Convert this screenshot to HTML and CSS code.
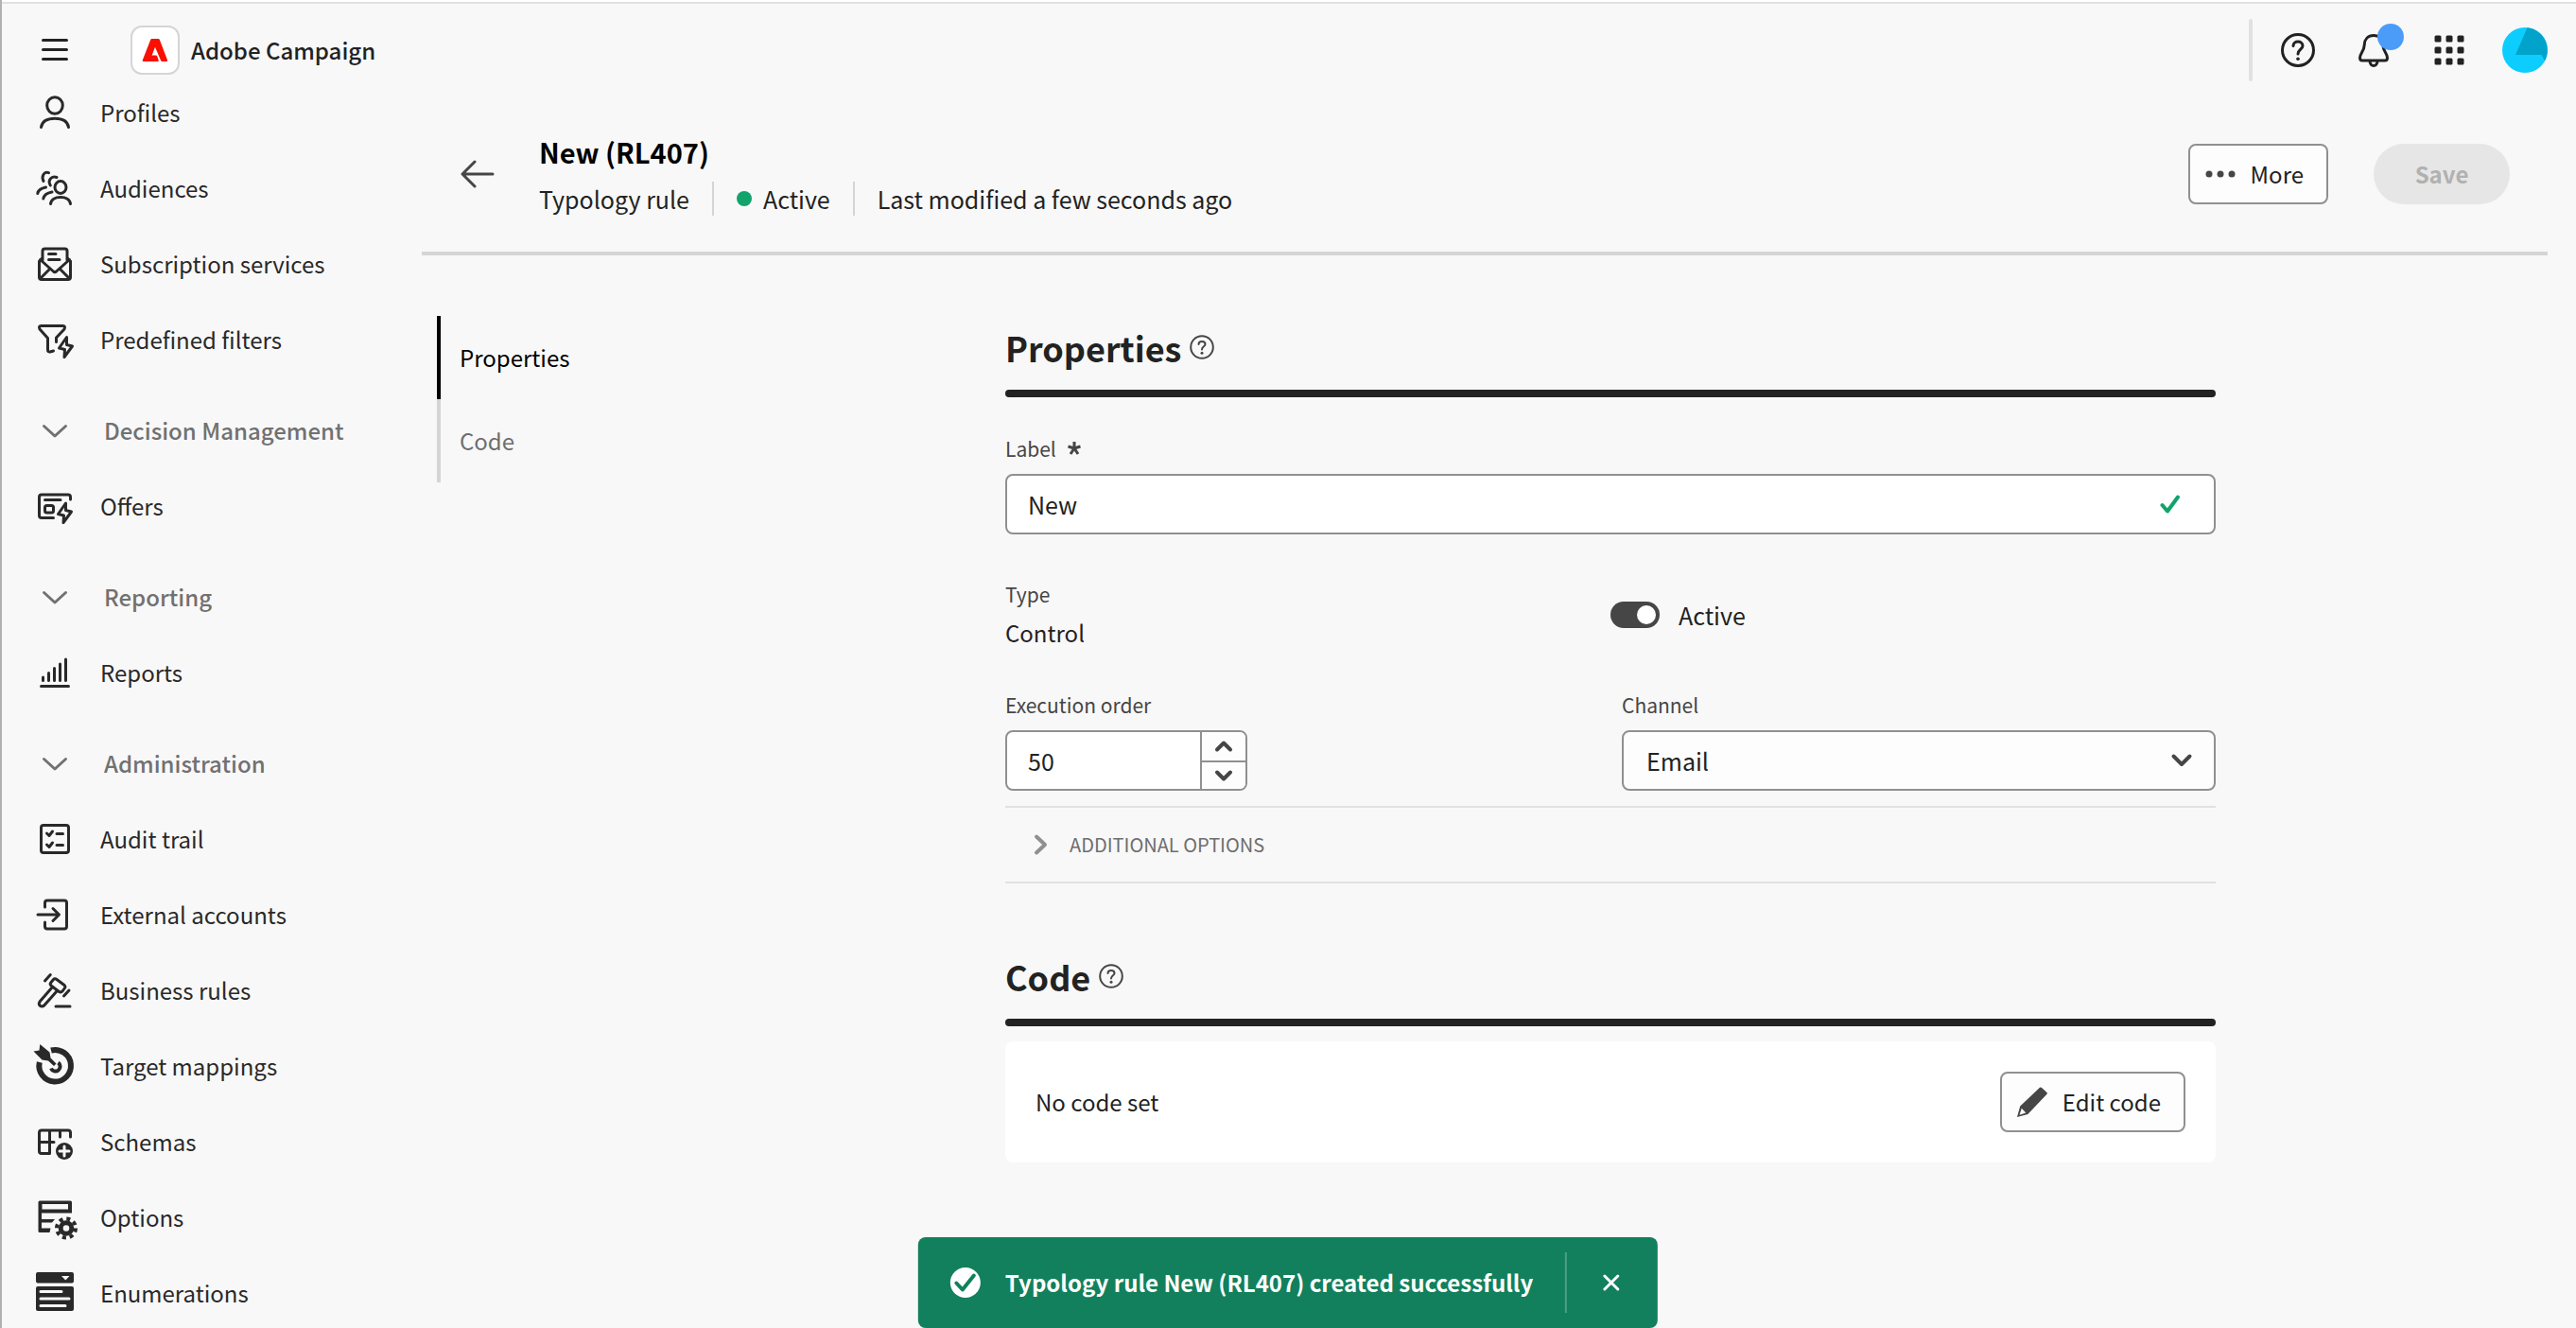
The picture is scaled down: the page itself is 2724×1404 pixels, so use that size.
FILE: index.html
```html
<!DOCTYPE html>
<html lang="en">
<head>
<meta charset="utf-8">
<title>New (RL407) - Adobe Campaign</title>
<link rel="stylesheet" href="styles.css">
</head>
<body>
<div class="app">
  <header class="topbar">
    <button class="icon-button menu-button" type="button" aria-label="Menu">
      <svg class="icon" viewBox="0 0 40 40"><path d="M7.500 9.500H32.500M7.500 19.500H32.500M7.500 29.500H32.500"/></svg>
    </button>
    <a class="brand" href="#">
      <span class="brand-logo">
        <svg viewBox="0 0 28 26" width="28" height="26"><path fill="#fa0f00" d="M10.500 1H17.500q.9 0 1.300.9L27 23.500q.5 1.500-1 1.500H21.500q-1 0-1.400-.9L14 9.800 10.600 18.500H15q.8 0 1.100.8L17.700 23.400q.5 1.600-1 1.600H1.500Q.200 25 .8 23.500L9.200 1.900Q9.600 1 10.500 1z"/></svg>
      </span>
      <span class="brand-name">Adobe Campaign</span>
    </a>
    <div class="topbar-actions">
      <button class="icon-button" type="button" aria-label="Help">
        <svg class="icon" viewBox="0 0 40 40"><circle cx="20" cy="20" r="16.500"/><path d="M15 15.500C15 9.500 25 9.500 25 15.500 25 19 20 19.500 20 24"/><circle class="fill" cx="20" cy="29.300" r="1.800"/></svg>
      </button>
      <button class="icon-button bell" type="button" aria-label="Notifications">
        <svg class="icon" viewBox="0 0 40 40"><path d="M20 4.500C14 4.500 10.500 8.500 10.300 14 10 21.500 5.500 23.500 5.500 28q0 3 2.500 3H32q2.500 0 2.500-3C34.500 23.500 30 21.500 29.700 14 29.500 8.500 26 4.500 20 4.500zM16 31.500C16 38 24 38 24 31.500"/></svg>
        <span class="badge"></span>
      </button>
      <button class="icon-button" type="button" aria-label="Apps">
        <svg class="icon solid" viewBox="0 0 40 40"><rect x="4.500" y="4.500" width="7" height="7" rx="1.500"/><rect x="16.500" y="4.500" width="7" height="7" rx="1.500"/><rect x="28.500" y="4.500" width="7" height="7" rx="1.500"/><rect x="4.500" y="16.500" width="7" height="7" rx="1.500"/><rect x="16.500" y="16.500" width="7" height="7" rx="1.500"/><rect x="28.500" y="16.500" width="7" height="7" rx="1.500"/><rect x="4.500" y="28.500" width="7" height="7" rx="1.500"/><rect x="16.500" y="28.500" width="7" height="7" rx="1.500"/><rect x="28.500" y="28.500" width="7" height="7" rx="1.500"/></svg>
      </button>
      <button class="avatar" type="button" aria-label="Account">
        <svg viewBox="0 0 48 48" width="48" height="48"><circle cx="24" cy="24" r="24" fill="#0dcdff"/><path fill="#01a3cb" d="M26.500.200A24 24 0 0 1 45 35.200L41.500 29H14z"/></svg>
      </button>
    </div>
  </header>

  <nav class="sidebar" aria-label="Main">
    <ul class="nav-list">
      <li><a class="nav-item" href="#"><svg class="icon" viewBox="0 0 40 40"><ellipse cx="20" cy="12.500" rx="8.300" ry="8.800"/><path d="M5.500 35.500C6.500 29.500 12 26.300 20 26.300S33.500 29.500 34.500 35.500"/></svg>Profiles</a></li>
      <li><a class="nav-item" href="#"><svg class="icon" viewBox="0 0 40 40"><ellipse cx="26" cy="19" rx="6" ry="6.500"/><path d="M15.500 36.500C16 32 20.500 29.500 26 29.500S36 32 36.500 36.500M22 8.500C16.500 6.500 12 11.500 15.300 17M13.500 3.700C8.500 2 5.500 7.500 8 12.500M17 24C11.500 25 8.500 27.500 7.800 31M10.500 19C5.500 20 2.300 22.500 1.800 25.500"/></svg>Audiences</a></li>
      <li><a class="nav-item" href="#"><svg class="icon" viewBox="0 0 40 40"><path d="M7 16V6.500q0-2.500 2.500-2.500H30.500q2.500 0 2.500 2.500V16M7 13.500L3.500 17V34q0 2.500 2.500 2.500H34q2.500 0 2.500-2.500V17L33 13.500M4.500 15.500L18.500 28q1.500 1.200 3 0L35.500 15.500M4.500 35.500L14.500 25.500M35.500 35.500L25.500 25.500M13.500 9.500H21M13.500 15.500H25"/></svg>Subscription services</a></li>
      <li><a class="nav-item" href="#"><svg class="icon" viewBox="0 0 40 40"><path d="M18.500 32L15 33q-2.500.3-2.500-2V18.500L4 9Q2.500 5.500 5.500 5.500H28.500q3 0 1.500 3.500L21.500 18V22.500"/><path d="M32.500 17.500L24.500 29 30.500 30.500 30 38.500 38.500 27 32.500 25.500z"/></svg>Predefined filters</a></li>
      <li class="nav-group"><button class="nav-item nav-heading" type="button" aria-expanded="true"><svg class="icon" viewBox="0 0 40 40"><path d="M8.500 15.500L20 26 31.500 15.500"/></svg>Decision Management</button></li>
      <li><a class="nav-item" href="#"><svg class="icon" viewBox="0 0 40 40"><path d="M36.500 13V10.500q0-2.500-2.500-2.500H6Q3.500 8 3.500 10.500V30q0 2.500 2.500 2.500H18.500M9.500 13.500H26"/><rect x="9.500" y="19.500" width="9" height="7.500" rx="2"/><path d="M31.500 17L23.500 28.500 29.500 30 29 37.500 37.500 26 31.500 24.500z"/></svg>Offers</a></li>
      <li class="nav-group"><button class="nav-item nav-heading" type="button" aria-expanded="true"><svg class="icon" viewBox="0 0 40 40"><path d="M8.500 15.500L20 26 31.500 15.500"/></svg>Reporting</button></li>
      <li><a class="nav-item" href="#"><svg class="icon" viewBox="0 0 40 40"><path d="M7.500 25V28.500M13.500 20.500V28.500M19.500 15.500V28.500M25.500 11V28.500M31.500 6V28.500M5.500 34.500H34.500"/></svg>Reports</a></li>
      <li class="nav-group"><button class="nav-item nav-heading" type="button" aria-expanded="true"><svg class="icon" viewBox="0 0 40 40"><path d="M8.500 15.500L20 26 31.500 15.500"/></svg>Administration</button></li>
      <li><a class="nav-item" href="#"><svg class="icon" viewBox="0 0 40 40"><rect x="5.500" y="5.500" width="29" height="29" rx="2.500"/><path d="M11.500 14L14 16.500 17.500 12M11.500 26L14 28.500 17.500 24M22 14.500H28.500M22 26.500H28.500"/></svg>Audit trail</a></li>
      <li><a class="nav-item" href="#"><svg class="icon" viewBox="0 0 40 40"><path d="M9.500 12V7.500Q9.500 5 12 5H30q2.500 0 2.500 2.500V32.500q0 2.500-2.500 2.500H12q-2.500 0-2.500-2.500V28M2 20H24M18 13.500L24.500 20 18 26.500"/></svg>External accounts</a></li>
      <li><a class="nav-item" href="#"><svg class="icon" viewBox="0 0 40 40"><path d="M18.500 8.500Q20 7 22 8.500L30 14.500q1.500 1.500.5 3L28 21q-1.500 1.500-3.500.5L16 15q-1.500-1.500-.3-3zM17 17L4 32q-1.500 2.500.2 4.200 2.300 1.500 4.500-.2L22 21M15.300 3.500L9.500 10M35 20L29.500 26M21 37H36"/></svg>Business rules</a></li>
      <li><a class="nav-item" href="#"><svg class="icon" viewBox="0 0 40 40"><path class="thick" d="M16 3.500A16.800 16.800 0 1 1 3.800 16"/><path class="fill" d="M-2.500 4.500L3.500 3.500 4.300-3 14.500 5.500 15.500 11.500 21.500 17.500 19 20 13 14.500 6.500 13.500z"/><path class="mid" d="M23.500 16.500A5 5 0 1 1 16 22.500"/></svg>Target mappings</a></li>
      <li><a class="nav-item" href="#"><svg class="icon" viewBox="0 0 40 40"><path d="M36.500 15V10.500Q36.500 8 34 8H6Q3.500 8 3.500 10.500V30q0 2.500 2.500 2.500H14.500V8M25.500 8V15M3.500 20.500H19"/><circle class="fill" cx="30" cy="30" r="9"/><path class="knock" d="M30 25V35M25 30H35"/></svg>Schemas</a></li>
      <li><a class="nav-item" href="#"><svg class="icon solid" viewBox="0 0 40 40"><path fill-rule="evenodd" d="M4 2.500H36.500q1.500 0 1.500 1.500V15.500H6V22H20L17 25.500H6V31.500H15.500L14.500 36H4q-1.500 0-1.500-1.500V4q0-1.500 1.500-1.500zM6.500 6V11.500H34V6z"/><circle class="gear-teeth" cx="32" cy="31.500" r="10"/><circle class="gear-body" cx="32" cy="31.500" r="5.800"/></svg>Options</a></li>
      <li><a class="nav-item" href="#"><svg class="icon solid" viewBox="0 0 40 40"><path fill-rule="evenodd" d="M2-2H38q2 0 2 2V7.500q0 2-2 2H2q-2 0-2-2V0Q0-2 2-2zM27 2L31.300 6.500 35.500 2z"/><rect y="13" width="40" height="26" rx="2"/><path class="knock" d="M5 18.500H27M5 26H35M5 33.500H31"/></svg>Enumerations</a></li>
    </ul>
  </nav>

  <main class="main">
    <header class="page-header">
      <button class="icon-button" type="button" aria-label="Back">
        <svg class="icon back" viewBox="0 0 40 40"><path d="M35 20H3.500M16 7L3 20 16 33"/></svg>
      </button>
      <div class="page-title">
        <h1>New (RL407)</h1>
        <div class="meta">
          <span>Typology rule</span>
          <span class="meta-status">Active</span>
          <span>Last modified a few seconds ago</span>
        </div>
      </div>
      <button class="button" type="button">
        <svg class="button-icon" viewBox="0 0 32 32"><circle cx="4" cy="16" r="3.500"/><circle cx="16" cy="16" r="3.500"/><circle cx="28" cy="16" r="3.500"/></svg>More
      </button>
      <button class="button-save" type="button" disabled>Save</button>
    </header>

    <div class="content">
      <nav class="tabs" aria-label="Sections">
        <a class="tab tab-current" href="#properties">Properties</a>
        <a class="tab" href="#code">Code</a>
      </nav>

      <form class="form">
        <section id="properties">
          <h2>Properties
            <svg class="help" viewBox="0 0 26 26"><circle cx="13" cy="13" r="11.800"/><path d="M9.500 10C9.500 6 16.500 6 16.500 10 16.500 12.300 13 12.500 13 15.500"/><circle class="fill" cx="13" cy="19.300" r="1.500"/></svg>
          </h2>
          <div class="field">
            <label for="label">Label <svg class="asterisk" viewBox="0 0 16 16"><path d="M8 8V1M8 8L14.500 6M8 8L12 14M8 8L4 14M8 8L1.500 6"/></svg></label>
            <div class="control">
              <input class="box" id="label" type="text" value="New" required>
              <svg class="control-icon valid" viewBox="0 0 24 24"><path d="M3.500 13L9 19.500 20 4.500"/></svg>
            </div>
          </div>
          <div class="row row-type">
            <div>
              <div class="caption">Type</div>
              <div class="value">Control</div>
            </div>
            <label class="switch"><input type="checkbox" checked>Active</label>
          </div>
          <div class="row row-order">
            <div class="field">
              <label for="order">Execution order</label>
              <div class="stepper">
                <input id="order" type="number" value="50">
                <div class="stepper-buttons">
                  <button type="button" aria-label="Increase"><svg viewBox="0 0 20 14"><path d="M3 10.500L10 3.500 17 10.500"/></svg></button>
                  <button type="button" aria-label="Decrease"><svg viewBox="0 0 20 14"><path d="M3 3.500L10 10.500 17 3.500"/></svg></button>
                </div>
              </div>
            </div>
            <div class="field field-channel">
              <label for="channel">Channel</label>
              <div class="control">
                <select class="box" id="channel"><option>Email</option></select>
                <svg class="control-icon arrow" viewBox="0 0 24 24"><path d="M3.500 7.500L12 16 20.500 7.500"/></svg>
              </div>
            </div>
          </div>
          <button class="accordion" type="button" aria-expanded="false">
            <svg viewBox="0 0 16 24"><path d="M3 3.500L12 12 3 20.500"/></svg>ADDITIONAL OPTIONS
          </button>
        </section>

        <section id="code">
          <h2>Code
            <svg class="help" viewBox="0 0 26 26"><circle cx="13" cy="13" r="11.800"/><path d="M9.500 10C9.500 6 16.500 6 16.500 10 16.500 12.300 13 12.500 13 15.500"/><circle class="fill" cx="13" cy="19.300" r="1.500"/></svg>
          </h2>
          <div class="card">
            <span>No code set</span>
            <button class="button" type="button">
              <svg class="button-icon" viewBox="0 0 32 32"><path fill-rule="evenodd" d="M24 .700Q25 0 26 .900L31.500 6q.8.900 0 1.800L11.300 29 0 32 3.200 20.500zM4.800 22.800L2.500 29.800 9.300 27.500z"/></svg>Edit code
            </button>
          </div>
        </section>
      </form>
    </div>
  </main>
</div>

<div class="toast" role="status">
  <svg class="toast-icon" viewBox="0 0 32 32"><circle cx="16" cy="16" r="16" fill="#fff" stroke="none"/><path d="M6.500 16.500L13 23.500 25 8.500"/></svg>
  <span>Typology rule New (RL407) created successfully</span>
  <button class="toast-close" type="button" aria-label="Close"><svg viewBox="0 0 20 20"><path d="M3 3L17 17M17 3L3 17"/></svg></button>
</div>
</body>
</html>
```
FILE: styles.css
```css
* {
  box-sizing: border-box;
}

body {
  margin: 0;
  background: #f8f8f8;
  color: #222;
  font-family: "Noto Sans CJK SC", "Open Sans", sans-serif;
  font-size: 24px;
  line-height: 36px;
  overflow: hidden;
}

button,
input,
select {
  color: inherit;
  font: inherit;
}

button {
  border: 0;
  background: none;
  padding: 0;
}

a {
  color: inherit;
  text-decoration: none;
}

svg {
  display: block;
  flex: none;
  overflow: visible;
  fill: none;
  stroke: currentColor;
  stroke-linecap: round;
  stroke-linejoin: round;
}

.app {
  display: grid;
  grid-template: auto 1fr / 444px 1fr;
  height: 100vh;
  border-left: 2px solid #b1b1b1;
}

/* Top bar */
.topbar {
  grid-column: 1 / -1;
  display: flex;
  align-items: center;
  border-top: 2px solid #fff;
  padding: 18px 30px 0 36px;
}

.topbar::before {
  content: "";
  position: absolute;
  top: 2px;
  left: 2px;
  right: 0;
  height: 2px;
  background: #e1e1e1;
}

.icon {
  width: 40px;
  height: 40px;
  stroke-width: 3;
}

.icon .fill {
  fill: currentColor;
  stroke: none;
}

.icon.solid {
  fill: currentColor;
  stroke: none;
}

.icon .knock {
  fill: none;
  stroke: #f8f8f8;
  stroke-width: 3;
}

.icon .thick {
  stroke-width: 6;
  stroke-linecap: butt;
}

.icon .mid {
  stroke-width: 4;
  stroke-linecap: butt;
}

.gear-teeth {
  fill: none;
  stroke: #292929;
  stroke-width: 4;
  stroke-linecap: butt;
  stroke-dasharray: 4 3.854;
}

.gear-body {
  fill: #f8f8f8;
  stroke: #292929;
  stroke-width: 5;
}

.menu-button {
  margin-right: 60px;
}

.brand {
  display: flex;
  align-items: center;
  gap: 12px;
  font-weight: 500;
}

.brand-logo {
  display: grid;
  place-items: center;
  width: 52px;
  height: 52px;
  border: 2px solid #d5d5d5;
  border-radius: 12px;
  background: #fff;
}

.brand-logo svg {
  stroke: none;
}

.topbar-actions {
  display: flex;
  align-items: center;
  gap: 40px;
  margin-left: auto;
  height: 66px;
}

.topbar-actions::before {
  content: "";
  width: 4px;
  height: 66px;
  margin-right: -12px;
  border-radius: 2px;
  background: #e1e1e1;
}

.bell {
  position: relative;
}

.badge {
  position: absolute;
  top: -8px;
  right: -12px;
  width: 28px;
  height: 28px;
  border-radius: 50%;
  background: #4b9cf9;
}

.avatar {
  margin-left: -4px;
}

.avatar svg {
  stroke: none;
}

/* Sidebar */
.sidebar {
  overflow: hidden;
  color: #292929;
}

.nav-list {
  margin: -7px 0 0;
  padding: 0;
  list-style: none;
}

.nav-item {
  display: flex;
  align-items: center;
  gap: 28px;
  width: 100%;
  height: 80px;
  padding-left: 36px;
}

.nav-group {
  padding-top: 16px;
}

.nav-heading {
  gap: 32px;
  color: #717171;
  font-weight: 500;
}

/* Page header */
.main {
  min-width: 0;
  padding-right: 30px;
}

.page-header {
  display: flex;
  align-items: center;
  height: 184px;
  padding: 16px 40px 0 40px;
  border-bottom: 4px solid #d5d5d5;
}

.icon.back {
  color: #464646;
}

.page-title {
  flex: 1;
  padding-left: 44px;
}

h1 {
  margin: 0 0 12px;
  color: #000;
  font-size: 29px;
  font-weight: 700;
  line-height: 40px;
}

.meta {
  display: flex;
  font-size: 25px;
}

.meta span + span {
  margin-left: 24px;
  padding-left: 24px;
  border-left: 2px solid #d5d5d5;
}

.meta-status {
  display: flex;
  align-items: center;
  gap: 12px;
}

.meta-status::before {
  content: "";
  width: 16px;
  height: 16px;
  border-radius: 50%;
  background: #12a36c;
}

.button {
  display: flex;
  align-items: center;
  gap: 16px;
  height: 64px;
  padding: 0 24px 0 16px;
  border: 2px solid #909090;
  border-radius: 8px;
  background: #fdfdfd;
}

.button-icon {
  width: 32px;
  height: 32px;
  fill: #464646;
  stroke: none;
}

.button-save {
  width: 144px;
  height: 64px;
  margin-left: 48px;
  border-radius: 32px;
  background: #e6e6e6;
  color: #b1b1b1;
  font-weight: 700;
}

/* Content */
.content {
  display: flex;
  padding-top: 64px;
}

.tabs {
  flex: none;
  width: 266px;
  padding-left: 16px;
}

.tab {
  display: flex;
  align-items: center;
  height: 88px;
  padding-left: 20px;
  border-left: 4px solid #d5d5d5;
  color: #6e6e6e;
}

.tab-current {
  border-color: #000;
  color: #000;
}

.form {
  flex: 0 1 1280px;
  min-width: 0;
  margin: 0 auto;
  padding-top: 11px;
}

h2 {
  display: flex;
  align-items: center;
  gap: 9px;
  margin: 0;
  font-size: 36px;
  font-weight: 700;
  line-height: 44px;
  flex-wrap: wrap;
}

h2::after {
  content: "";
  flex: 0 0 100%;
  height: 8px;
  margin-top: 14px;
  border-radius: 4px;
  background: #222;
}

.help {
  width: 26px;
  height: 26px;
  color: #464646;
  stroke-width: 2;
}

.help .fill {
  fill: currentColor;
  stroke: none;
}

.field label,
.caption {
  display: flex;
  align-items: center;
  gap: 11px;
  color: #464646;
  font-size: 21px;
  line-height: 30px;
}

.field label {
  margin-bottom: 12px;
}

section > .field {
  margin-top: 39px;
}

.asterisk {
  width: 16px;
  height: 16px;
  stroke-width: 3;
  stroke-linecap: butt;
}

.control {
  position: relative;
}

.box {
  display: block;
  width: 100%;
  height: 64px;
  padding: 0 22px;
  border: 2px solid #909090;
  border-radius: 8px;
  background: #fff;
  font-size: 25px;
  appearance: none;
}

.control-icon {
  position: absolute;
  top: 20px;
  width: 24px;
  height: 24px;
  stroke-width: 4;
  pointer-events: none;
}

.valid {
  right: 36px;
  color: #12a36c;
}

.arrow {
  right: 24px;
  color: #464646;
}

.row {
  display: flex;
  justify-content: space-between;
}

.row-type {
  margin-top: 48px;
}

.value {
  margin-top: 8px;
}

.switch {
  display: flex;
  align-items: center;
  gap: 20px;
  width: 50%;
  font-size: 25px;
}

.switch input {
  appearance: none;
  display: flex;
  justify-content: flex-end;
  align-items: center;
  width: 52px;
  height: 28px;
  margin: 0;
  padding: 4px;
  border-radius: 14px;
  background: #464646;
}

.switch input::before {
  content: "";
  width: 20px;
  height: 20px;
  border-radius: 50%;
  background: #fff;
}

.row-order {
  margin-top: 43px;
}

.field-channel {
  width: 628px;
}

.field-channel .box {
  padding: 0 24px;
  background: #fdfdfd;
}

.stepper {
  display: flex;
  width: 256px;
  height: 64px;
  border: 2px solid #909090;
  border-radius: 8px;
  background: #fff;
  overflow: hidden;
}

.stepper input {
  flex: 1;
  min-width: 0;
  padding: 0 22px;
  border: 0;
  background: none;
  font-size: 25px;
  appearance: textfield;
}

.stepper input::-webkit-inner-spin-button {
  display: none;
}

.stepper-buttons {
  display: grid;
  grid-template-rows: 1fr 1fr;
  width: 48px;
  border-left: 2px solid #909090;
  background: #fdfdfd;
}

.stepper-buttons button {
  display: grid;
  place-items: center;
}

.stepper-buttons button + button {
  border-top: 2px solid #909090;
}

.stepper-buttons svg {
  width: 20px;
  height: 14px;
  color: #464646;
  stroke-width: 4;
}

.accordion {
  display: flex;
  align-items: center;
  gap: 22px;
  width: 100%;
  height: 82px;
  margin: 16px 0 76px;
  padding-left: 30px;
  border-top: 2px solid #e1e1e1;
  border-bottom: 2px solid #e1e1e1;
  color: #6e6e6e;
  font-size: 20px;
}

.accordion svg {
  width: 16px;
  height: 24px;
  color: #909090;
  stroke-width: 4;
}

.card {
  display: flex;
  align-items: center;
  justify-content: space-between;
  height: 128px;
  margin-top: 16px;
  padding: 0 32px;
  border-radius: 8px;
  background: #fff;
}

/* Toast */
.toast {
  position: fixed;
  bottom: 0;
  left: 50%;
  transform: translateX(-50%);
  display: flex;
  align-items: center;
  height: 96px;
  padding: 0 24px 0 34px;
  border-radius: 8px;
  background: #12805c;
  color: #fff;
  font-weight: 700;
  white-space: nowrap;
}

.toast-icon {
  width: 32px;
  height: 32px;
  margin-right: 26px;
  stroke: #12805c;
  stroke-width: 4;
}

.toast-close {
  display: grid;
  place-items: center;
  width: 74px;
  height: 64px;
  margin-left: 34px;
  padding-left: 22px;
  border-left: 2px solid #4d9f83;
}

.toast-close svg {
  width: 20px;
  height: 20px;
  stroke-width: 3;
}
```
